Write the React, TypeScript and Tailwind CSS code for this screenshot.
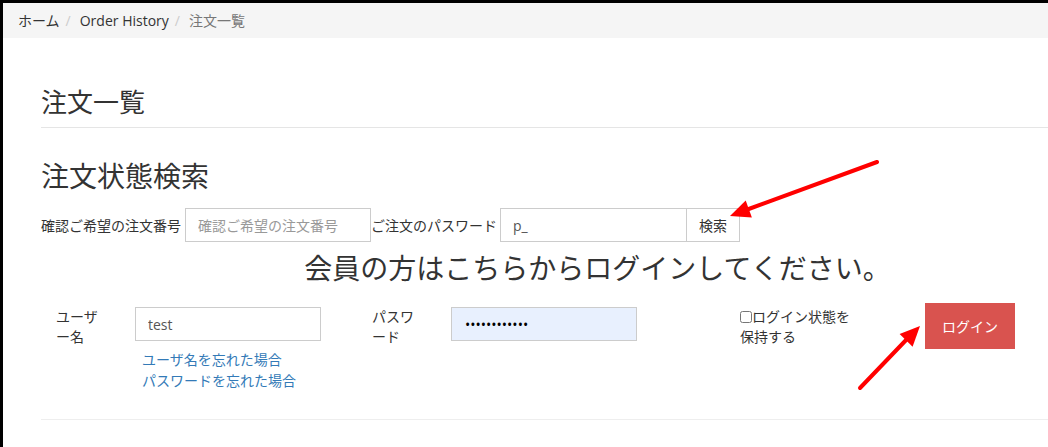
export default function App() {
  return (
    <div className="relative min-h-[447px] overflow-hidden bg-black pl-[3px] pt-[3px] font-['Open_Sans','Noto_Sans_CJK_JP',sans-serif] text-[14px] text-[#333]">
      <div className="min-h-[444px] bg-white">
        {/* breadcrumb */}
        <nav className="flex h-[35px] items-center bg-[#f5f5f5] px-[15px] leading-5">
          <a href="#" className="text-[#333]">ホーム</a>
          <span className="px-[6px] text-[#ccc]">/</span>
          <a href="#" className="ml-[3px] text-[#333]">Order History</a>
          <span className="px-[6px] text-[#ccc]">/</span>
          <span className="ml-[3px] text-[#777]">注文一覧</span>
        </nav>

        <div className="pl-[38px]">
          <div className="mt-[49px] border-b border-[#e5e5e5] pb-[10px]">
            <h1 className="text-[26px] leading-[30px]">注文一覧</h1>
          </div>

          <h2 className="mt-[32px] text-[28px] leading-[32px]">注文状態検索</h2>

          {/* order search */}
          <div className="mt-[16px] flex items-center">
            <label className="mr-[4px]">確認ご希望の注文番号</label>
            <input
              className="h-[34px] w-[186px] border border-[#ccc] px-[12px] text-[#555] outline-none placeholder:text-[#999]"
              placeholder="確認ご希望の注文番号"
            />
            <label className="mr-[3px]">ご注文のパスワード</label>
            <input
              className="h-[34px] w-[187px] border border-[#ccc] px-[12px] text-[#555] outline-none"
              defaultValue="p_"
            />
            <button className="-ml-px h-[34px] w-[54px] border border-[#ccc] bg-white text-[#333]">検索</button>
          </div>

          <p className="mt-[10px] pl-[106px] text-center text-[28px] leading-[32px]">
            会員の方はこちらからログインしてください。
          </p>

          {/* login */}
          <div className="mt-[19px] flex items-start border-b border-[#eee] pb-[28px] pl-[15px]">
            <label className="mt-[4px] w-[48px] leading-[20px]">ユーザー名</label>
            <div className="ml-[31px] mt-[4px]">
              <input
                className="h-[34px] w-[186px] border border-[#ccc] px-[12px] text-[#555] outline-none"
                defaultValue="test"
              />
              <div className="ml-[7px] mt-[8px] flex flex-col leading-[21px] text-[#337ab7]">
                <a href="#">ユーザ名を忘れた場合</a>
                <a href="#">パスワードを忘れた場合</a>
              </div>
            </div>
            <label className="ml-[51px] mt-[4px] w-[48px] leading-[20px]">パスワード</label>
            <input
              type="password"
              readOnly
              className="ml-[31px] mt-[4px] h-[34px] w-[186px] border border-[#ccc] bg-[#e8f0fe] px-[13px] text-[14px] text-black outline-none"
              defaultValue="abcdefghijkl"
            />
            <label className="ml-[103px] mt-[4px] w-[115px] leading-[20px]">
              <input type="checkbox" className="mr-0 h-[12px] w-[12px] align-[-1px]" />
              ログイン状態を保持する
            </label>
            <button className="ml-[70px] h-[46px] w-[90px] bg-[#d9534f] text-white">ログイン</button>
          </div>
        </div>
      </div>

      {/* red annotation arrows */}
      <svg className="pointer-events-none absolute left-0 top-0" width="1048" height="447">
        <line x1="877" y1="162" x2="746" y2="210" stroke="#ff0000" strokeWidth="4" strokeLinecap="round" />
        <polygon points="730,216 745.7,200.6 751.9,217.5" fill="#ff0000" />
        <line x1="860" y1="388" x2="908" y2="338" stroke="#ff0000" strokeWidth="4" strokeLinecap="round" />
        <polygon points="920,326 899.6,334.1 912.6,346.7" fill="#ff0000" />
      </svg>
    </div>
  );
}
